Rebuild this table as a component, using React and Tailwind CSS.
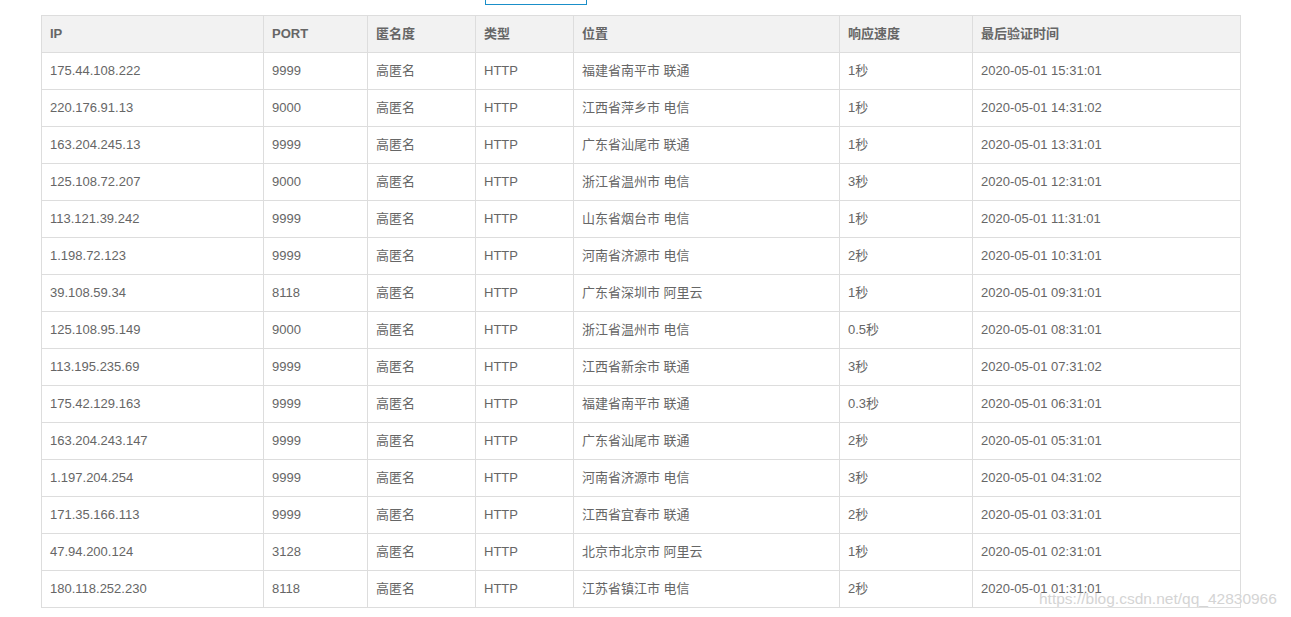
import React from "react";

const rows = [
  ["175.44.108.222", "9999", "高匿名", "HTTP", "福建省南平市 联通", "1秒", "2020-05-01 15:31:01"],
  ["220.176.91.13", "9000", "高匿名", "HTTP", "江西省萍乡市 电信", "1秒", "2020-05-01 14:31:02"],
  ["163.204.245.13", "9999", "高匿名", "HTTP", "广东省汕尾市 联通", "1秒", "2020-05-01 13:31:01"],
  ["125.108.72.207", "9000", "高匿名", "HTTP", "浙江省温州市 电信", "3秒", "2020-05-01 12:31:01"],
  ["113.121.39.242", "9999", "高匿名", "HTTP", "山东省烟台市 电信", "1秒", "2020-05-01 11:31:01"],
  ["1.198.72.123", "9999", "高匿名", "HTTP", "河南省济源市 电信", "2秒", "2020-05-01 10:31:01"],
  ["39.108.59.34", "8118", "高匿名", "HTTP", "广东省深圳市 阿里云", "1秒", "2020-05-01 09:31:01"],
  ["125.108.95.149", "9000", "高匿名", "HTTP", "浙江省温州市 电信", "0.5秒", "2020-05-01 08:31:01"],
  ["113.195.235.69", "9999", "高匿名", "HTTP", "江西省新余市 联通", "3秒", "2020-05-01 07:31:02"],
  ["175.42.129.163", "9999", "高匿名", "HTTP", "福建省南平市 联通", "0.3秒", "2020-05-01 06:31:01"],
  ["163.204.243.147", "9999", "高匿名", "HTTP", "广东省汕尾市 联通", "2秒", "2020-05-01 05:31:01"],
  ["1.197.204.254", "9999", "高匿名", "HTTP", "河南省济源市 电信", "3秒", "2020-05-01 04:31:02"],
  ["171.35.166.113", "9999", "高匿名", "HTTP", "江西省宜春市 联通", "2秒", "2020-05-01 03:31:01"],
  ["47.94.200.124", "3128", "高匿名", "HTTP", "北京市北京市 阿里云", "1秒", "2020-05-01 02:31:01"],
  ["180.118.252.230", "8118", "高匿名", "HTTP", "江苏省镇江市 电信", "2秒", "2020-05-01 01:31:01"],
];

const headers = ["IP", "PORT", "匿名度", "类型", "位置", "响应速度", "最后验证时间"];
const widths = ["w-[222px]", "w-[104px]", "w-[108px]", "w-[98px]", "w-[266px]", "w-[133px]", "w-[268px]"];

export default function App() {
  return (
    <div className="relative w-[1291px] h-[617px] bg-white overflow-hidden text-[13px] text-[#666]" style={{ fontFamily: '"Liberation Sans", Arial, "Noto Sans CJK SC", sans-serif' }}>
      <div className="ml-[485px] w-[102px] h-[5px] border-x border-b border-[#1a8fc9]" />
      <table className="ml-[41px] mt-[10px] w-[1199px] border-collapse table-fixed">
        <colgroup>
          {widths.map((w, i) => (
            <col key={i} className={w} />
          ))}
        </colgroup>
        <thead>
          <tr className="bg-[#f2f2f2] h-[37px]">
            {headers.map((h) => (
              <th key={h} className="border border-[#ddd] text-left font-bold px-[8px] py-0 align-middle">
                {h}
              </th>
            ))}
          </tr>
        </thead>
        <tbody>
          {rows.map((r, i) => (
            <tr key={i} className="h-[37px]">
              {r.map((c, j) => (
                <td key={j} className="border border-[#ddd] px-[8px] py-0 align-middle whitespace-nowrap">
                  {c}
                </td>
              ))}
            </tr>
          ))}
        </tbody>
      </table>
      <div className="absolute left-[1039px] top-[589px] text-[15.5px] leading-[20px] text-[#d4d4d4] whitespace-nowrap" style={{ textShadow: "0 0 1px #fff" }}>
        https://blog.csdn.net/qq_42830966
      </div>
    </div>
  );
}
